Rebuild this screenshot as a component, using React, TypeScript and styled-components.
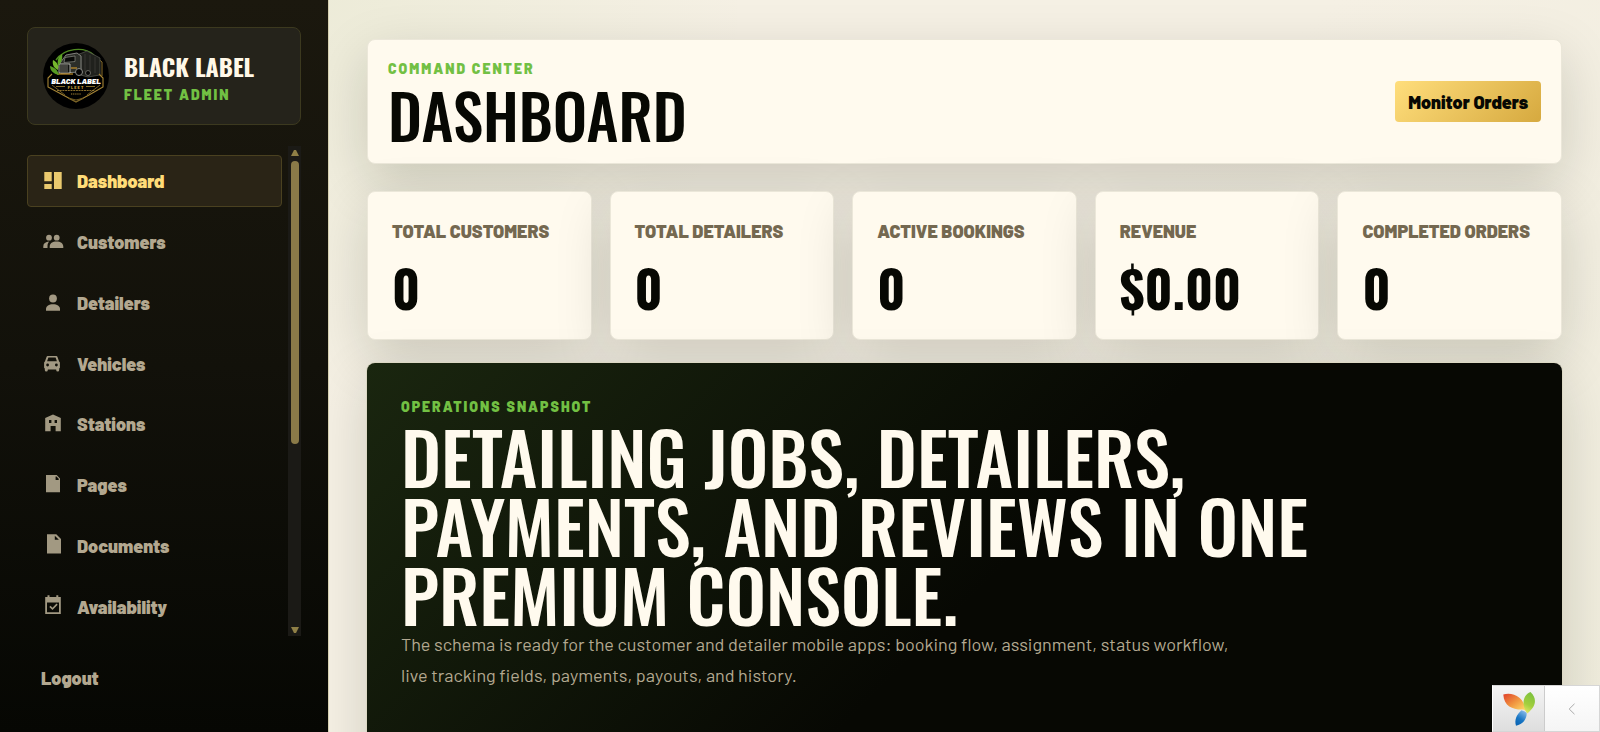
import React from 'react';
import styled, { createGlobalStyle, css } from 'styled-components';

const GlobalStyle = createGlobalStyle`
  *, *::before, *::after { box-sizing: border-box; }
  body {
    margin: 0;
    background: #f3efe3;
    font-family: Barlow, Roboto, sans-serif;
    font-size: 18px;
    color: #070803;
  }
  h1, h2, p, ul, dl, dd { margin: 0; padding: 0; }
  ul { list-style: none; }
  a { color: inherit; text-decoration: none; }
  button { font: inherit; border: 0; cursor: pointer; }
`;

const display = css`
  font-family: Oswald, 'Open Sans Condensed', sans-serif;
  text-transform: uppercase;
`;

const Shell = styled.div`
  display: grid;
  grid-template-columns: 329px minmax(0, 1fr);
  height: 100vh;
`;

const Sidebar = styled.aside`
  display: flex;
  flex-direction: column;
  min-height: 0;
  padding: 27px 27px 28px;
  border-right: 1px solid #d6d0b0;
  background: linear-gradient(180deg, #1b180e 0%, #12110a 50%, #060703 100%);
`;

const Brand = styled.a`
  display: flex;
  align-items: center;
  gap: 15px;
  height: 98px;
  flex: none;
  padding: 15px;
  border: 1px solid #3c391f;
  border-radius: 8px;
  background: #25231b;
`;

const BrandText = styled.span`
  display: flex;
  flex-direction: column;
  gap: 5px;
  padding-top: 2px;
`;

const BrandName = styled.strong`
  ${display}
  font-size: 24px;
  line-height: 29px;
  font-weight: 700;
  color: #fff8e8;
`;

const Eyebrow = styled.span`
  display: block;
  font-size: 14px;
  line-height: 17px;
  font-weight: 900;
  letter-spacing: 2px;
  text-transform: uppercase;
  color: #72c043;
`;

const NavScroll = styled.nav`
  display: flex;
  gap: 6px;
  flex: 1;
  min-height: 0;
  margin-top: 21px;
`;

const NavList = styled.ul`
  display: flex;
  flex-direction: column;
  justify-content: space-between;
  flex: 1;
  min-width: 0;
  padding: 9px 0 3px;
  overflow: hidden;
`;

const NavLink = styled.a<{ $active?: boolean }>`
  display: flex;
  align-items: center;
  gap: 14px;
  height: 52px;
  padding: 0 15px;
  border: 1px solid ${p => (p.$active ? '#4a4120' : 'transparent')};
  border-radius: 4px;
  background: ${p => (p.$active ? '#2a2416' : 'transparent')};
  color: ${p => (p.$active ? '#ffdc78' : '#b3a890')};
  font-weight: 900;
`;

const NavIcon = styled.svg`
  flex: none;
  width: 20px;
  height: 20px;
  overflow: visible;
  fill: currentColor;
  opacity: 0.9;
`;

const ScrollTrack = styled.div`
  display: flex;
  flex-direction: column;
  align-items: center;
  width: 13px;
  padding: 4px 0 3px;
  background: #1b1a16;
`;

const ScrollThumb = styled.div`
  width: 8px;
  height: 283px;
  margin: 5px 0 auto;
  border-radius: 4px;
  background: #8a7a48;
`;

const ScrollArrow = styled.svg`
  width: 8px;
  height: 6px;
  fill: #8f7f46;
`;

const Logout = styled.button`
  align-self: flex-start;
  height: 52px;
  margin-top: 16px;
  padding: 0 14px;
  background: transparent;
  color: #b3a890;
  font-weight: 900;
`;

const Main = styled.main`
  display: flex;
  flex-direction: column;
  height: 100vh;
  padding: 39px 38px;
  overflow-y: auto;
  scrollbar-width: none;
  background:
    radial-gradient(circle at 0 0, rgba(140, 180, 80, 0.08), transparent 420px),
    linear-gradient(135deg, #f5f0e4 0%, #f5f0e4 50%, #efecdc 100%);
`;

const panel = css`
  border: 1px solid #ebe7d9;
  border-radius: 8px;
  background: #fffaee;
  box-shadow: 0 18px 54px rgba(20, 26, 8, 0.17);
`;

const PageHeader = styled.header`
  ${panel}
  display: flex;
  align-items: center;
  justify-content: space-between;
  flex: none;
  padding: 20px;
`;

const PageTitle = styled.h1`
  ${display}
  margin-top: 9px;
  font-size: 61px;
  line-height: 57px;
  font-weight: 500;
`;

const PrimaryAction = styled.button`
  height: 41px;
  padding: 0 13px;
  border-radius: 4px;
  background: linear-gradient(135deg, #ffde7c, #d6a93f);
  color: #070803;
  font-weight: 900;
`;

const Stats = styled.dl`
  display: grid;
  grid-template-columns: repeat(5, minmax(0, 1fr));
  gap: 18px;
  flex: none;
  margin-top: 27px;
`;

const StatCard = styled.div`
  ${panel}
  height: 149px;
  padding: 26px 24px;
`;

const StatLabel = styled.dt`
  line-height: 27px;
  font-weight: 900;
  text-transform: uppercase;
  white-space: nowrap;
  color: #746850;
`;

const StatValue = styled.dd`
  ${display}
  margin-top: 16px;
  font-size: 51px;
  line-height: 52px;
  font-weight: 700;
`;

const Hero = styled.section`
  flex: none;
  min-height: 420px;
  margin-top: 23px;
  padding: 35px 34px;
  border-radius: 8px;
  background: linear-gradient(135deg, #1a260f 0%, #070803 52%);
  box-shadow: 0 0 0 1px #dcd8c4, 0 18px 54px rgba(20, 26, 8, 0.17);
`;

const HeroTitle = styled.h2`
  ${display}
  max-width: 940px;
  margin-top: 6px;
  font-size: 72px;
  line-height: 69px;
  font-weight: 500;
  color: #fffaee;
`;

const HeroText = styled.p`
  max-width: 840px;
  margin-top: 1px;
  line-height: 31px;
  color: #b3a890;
`;

const DebugBar = styled.div`
  position: fixed;
  right: 0;
  bottom: 0;
  display: flex;
  height: 47px;
  border: 1px solid #d6d6d6;
  border-left-color: #fff;
`;

const DebugLogo = styled.a`
  display: grid;
  place-items: center;
  width: 52px;
  border-right: 1px solid #ccc;
  background: linear-gradient(#f4f4f4, #dedede);
`;

const DebugToggle = styled.button`
  display: grid;
  place-items: center;
  width: 54px;
  padding: 0;
  background: linear-gradient(#fff, #f5f5f5);
`;

const icons: Record<string, React.ReactNode> = {
  Dashboard: <path d="M1.300 1h7.400v9.300h-7.400zM1.300 13h7.400v5h-7.400zM11 1h7.700v17h-7.700z" />,
  Customers: (
    <>
      <circle cx="6" cy="5.700" r="2.900" />
      <circle cx="13.700" cy="5.700" r="2.900" />
      <path d="M.3 16v-1.800c0-2.600 2.200-4.300 5.900-4.600-1.100 1.100-1.700 2.600-1.700 4.400v2zM6.700 16v-1.400c0-3.200 2.800-5.100 6.800-5.100s6.800 1.900 6.800 5.100v1.400z" />
    </>
  ),
  Detailers: (
    <>
      <circle cx="10" cy="5.500" r="3.900" />
      <path d="M3 17.700v-1.600c0-3 3-4.900 7-4.900s7 1.900 7 4.900v1.600z" />
    </>
  ),
  Vehicles: (
    <path
      fillRule="evenodd"
      d="M4.700 2h8.600c.6 0 1 .3 1.200.9l1.500 4.300.9 1.200v5.300l-.7.900v1.400a1.500 1.500 0 0 1-3 0v-.6h-8.400v.6a1.500 1.500 0 0 1-3 0v-1.400l-.7-.9v-5.300l.9-1.200 1.500-4.300c.2-.6.600-.9 1.200-.9zm.7 1.500-1.300 3.700h9.800l-1.300-3.700zM4.600 9.600a1.400 1.400 0 1 0 0 2.800 1.400 1.400 0 0 0 0-2.800zm8.800 0a1.400 1.400 0 1 0 0 2.800 1.400 1.400 0 0 0 0-2.800z"
    />
  ),
  Stations: (
    <path
      fillRule="evenodd"
      d="M10 .5l7.800 3.600v13.100h-5.200v-5.200h-5v5.200h-5.400v-13.100zM6 6v3h2.400v-3zm5.600 0v3h2.400v-3z"
    />
  ),
  Pages: (
    <path fillRule="evenodd" d="M3 0h10.700l3.300 3.500v13.800h-14zm9.600 1.500v3.400h3.100v-1.100l-2.200-2.300z" />
  ),
  Documents: (
    <path fillRule="evenodd" d="M4-1.700h9.300l4.700 4.700v14.500h-14zm7.800 1.500v4h4.100z" />
  ),
  Availability: (
    <path
      fillRule="evenodd"
      d="M4.500-1.800h2v1.800h6.800v-1.800h2v1.800h2.500v17h-15.600v-17h2.300zM4 5.500v9.700h12v-9.700zm2.300 4.400 1.200-1.200 2 2 4-4.100 1.200 1.200-5.200 5.300z"
    />
  ),
};

const navItems = Object.keys(icons);

const stats = [
  ['Total Customers', '0'],
  ['Total Detailers', '0'],
  ['Active Bookings', '0'],
  ['Revenue', '$0.00'],
  ['Completed Orders', '0'],
];

const BrandLogo = () => (
  <svg width="66" height="66" viewBox="0 0 66 66" aria-hidden="true">
    <circle cx="33" cy="33" r="33" fill="#000" />
    <path d="M13 17C21 5 41 3 51 12" fill="none" stroke="#4f8a22" strokeWidth="1.400" />
    <path d="M49 11l10 8v14" fill="none" stroke="#8a6f2c" />
    <path d="M34 12l10-4 13 7v17l-12 2-11-3z" fill="#20211d" stroke="#5a5b53" strokeWidth=".7" />
    <path d="M38 13v14M42 11v18M47 12v18M52 14v16" stroke="#3c3d37" strokeWidth=".8" />
    <path d="M17 20l6-8 11-2 4 3v16l-20 1-2-6z" fill="#2c2e29" stroke="#9a9c94" strokeWidth=".8" />
    <path d="M22 14.500l10-1.500v5.500l-11 1z" fill="#090a08" stroke="#9d9e95" strokeWidth=".6" />
    <path d="M16 21h11v9h-11z" fill="#11120f" stroke="#d0d0c8" strokeWidth=".8" />
    <path d="M18 22v7M20 22v7M22 22v7M24 22v7" stroke="#a0a19a" strokeWidth=".7" />
    <path d="M28 25h6M14 31h16" stroke="#e5a52b" strokeWidth="1.200" />
    <circle cx="36" cy="29" r="3.500" fill="#050505" stroke="#8a8a84" />
    <circle cx="45" cy="30" r="2.500" fill="#050505" stroke="#66665f" />
    <path d="M10 17c4 2 6 5 5 10-4-2-6-5-5-10z" fill="#76b82d" />
    <path d="M19 11c1 5-1 9-4 12-1-5 0-9 4-12z" fill="#5fa625" />
    <path d="M7 23c4 1 8 4 9 9-5-1-9-4-9-9z" fill="#579a22" />
    <path d="M9 31l-4 4v9l15 8 13 7 13-7 14-8v-9l-4-4" fill="none" stroke="#a78636" strokeWidth="1.100" />
    <path d="M9 42l13 10M57 42l-13 10M25 55l8 2 8-2-8 4z" fill="none" stroke="#6f5a22" />
    <text x="33" y="41" textAnchor="middle" fontFamily="Barlow" fontSize="8" fontStyle="italic" fontWeight="900" fill="#fff">
      BLACK LABEL
    </text>
    <text x="33" y="45.500" textAnchor="middle" fontFamily="Barlow" fontSize="4" letterSpacing="1" fontWeight="800" fill="#d3a83e">
      FLEET
    </text>
    <path d="M13 43.500h9M43 43.500h9" stroke="#a78636" strokeWidth=".8" />
    <path d="M14 47.500h38" stroke="#a78636" strokeWidth=".8" strokeDasharray="2 .7" />
    <path d="M28 51h10" stroke="#a78636" strokeDasharray="1.300 .8" />
  </svg>
);

const YiiLogo = () => (
  <svg width="34" height="36" viewBox="0 0 34 36" aria-hidden="true">
    <defs>
      <linearGradient id="leafOrange" x1="0" y1="0" x2="1" y2="1">
        <stop offset="0" stopColor="#e0402a" />
        <stop offset=".5" stopColor="#f0953f" />
        <stop offset="1" stopColor="#ffe36e" />
      </linearGradient>
      <linearGradient id="leafGreen" x1=".6" y1="0" x2=".3" y2="1">
        <stop offset="0" stopColor="#7cc13d" />
        <stop offset=".6" stopColor="#a3cf3e" />
        <stop offset="1" stopColor="#e3e866" />
      </linearGradient>
      <linearGradient id="leafBlue" x1=".8" y1="0" x2=".3" y2="1">
        <stop offset="0" stopColor="#8dbdea" />
        <stop offset=".6" stopColor="#1976c4" />
        <stop offset="1" stopColor="#0b65b4" />
      </linearGradient>
    </defs>
    <path d="M1.300 3.500C10 1 22 5 23.900 20c-1-.8-2-1.300-2.800-1.500C12 19 2 16 1.300 3.500z" fill="url(#leafOrange)" />
    <path d="M28.500 1C36 8 33.500 16 25 22.500 19.500 14 20.500 4 28.500 1z" fill="url(#leafGreen)" />
    <path d="M19.500 19.300c1.500.4 4 1.300 5.200 2.700.2 6-3.900 11.500-10.700 12.700-1.800-5.700.5-11 5.500-15.400z" fill="url(#leafBlue)" />
  </svg>
);

export default function App() {
  return (
    <>
      <GlobalStyle />
      <Shell>
        <Sidebar>
          <Brand href="#">
            <BrandLogo />
            <BrandText>
              <BrandName>Black Label</BrandName>
              <Eyebrow>Fleet Admin</Eyebrow>
            </BrandText>
          </Brand>
          <NavScroll aria-label="Main">
            <NavList>
              {navItems.map((name, i) => (
                <li key={name}>
                  <NavLink href={`#${name.toLowerCase()}`} $active={i === 0}>
                    <NavIcon viewBox="0 0 20 20" aria-hidden="true">{icons[name]}</NavIcon>
                    {name}
                  </NavLink>
                </li>
              ))}
            </NavList>
            <ScrollTrack aria-hidden="true">
              <ScrollArrow viewBox="0 0 8 6"><path d="M3 0h2l3 6h-8z" /></ScrollArrow>
              <ScrollThumb />
              <ScrollArrow viewBox="0 0 8 6"><path d="M0 0h8l-3 6h-2z" /></ScrollArrow>
            </ScrollTrack>
          </NavScroll>
          <Logout type="button">Logout</Logout>
        </Sidebar>
        <Main>
          <PageHeader>
            <div>
              <Eyebrow>Command Center</Eyebrow>
              <PageTitle>Dashboard</PageTitle>
            </div>
            <PrimaryAction type="button">Monitor Orders</PrimaryAction>
          </PageHeader>
          <Stats>
            {stats.map(([label, value]) => (
              <StatCard key={label}>
                <StatLabel>{label}</StatLabel>
                <StatValue>{value}</StatValue>
              </StatCard>
            ))}
          </Stats>
          <Hero>
            <Eyebrow>Operations Snapshot</Eyebrow>
            <HeroTitle>Detailing jobs, detailers, payments, and reviews in one premium console.</HeroTitle>
            <HeroText>
              The schema is ready for the customer and detailer mobile apps: booking flow, assignment,
              status workflow, live tracking fields, payments, payouts, and history.
            </HeroText>
          </Hero>
        </Main>
      </Shell>
      <DebugBar>
        <DebugLogo href="#debug" aria-label="Debugger"><YiiLogo /></DebugLogo>
        <DebugToggle type="button" aria-label="Toggle debug bar">
          <svg width="8" height="12" viewBox="0 0 8 12" fill="none" stroke="#aaa">
            <path d="M6.500 .8l-5.300 5.200 5.300 5.200" />
          </svg>
        </DebugToggle>
      </DebugBar>
    </>
  );
}
